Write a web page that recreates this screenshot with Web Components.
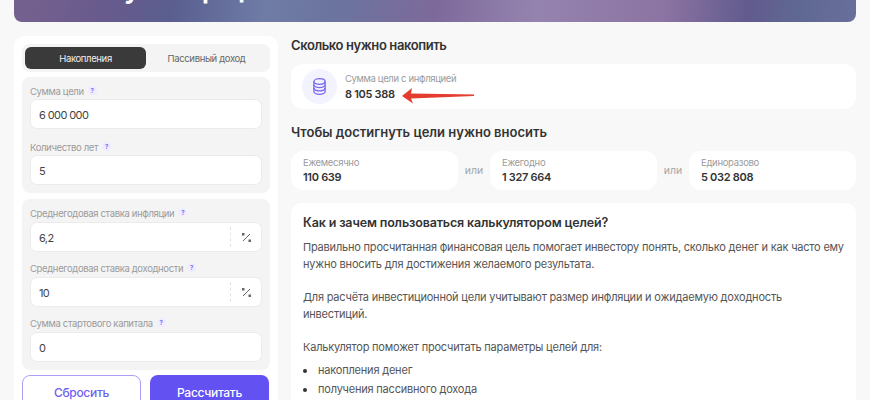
<!DOCTYPE html>
<html lang="ru">
<head>
<meta charset="utf-8">
<style>
  html, body { margin: 0; height: 400px; overflow: hidden; background: #f8f8f8; }
  body { font-family: Inter, "Noto Sans", sans-serif; color: #333; }
  .page { display: flex; flex-direction: column; padding: 0 14px; gap: 14px; }
  .main { display: grid; grid-template-columns: 264px 565px; column-gap: 13px; align-items: start; }
  .right { display: flex; flex-direction: column; }
  .sums { display: grid; grid-template-columns: 167px 32px 167px 32px 167px; align-items: center; }
  .or { font-size: 10.5px; color: #a5a5a5; text-align: center; }
</style>
</head>
<body>
<div class="page">
  <top-banner>Калькулятор целей</top-banner>
  <div class="main">
    <calc-form></calc-form>
    <div class="right">
      <section-title style="--ls:-.4px">Сколько нужно накопить</section-title>
      <goal-result label="Сумма цели с инфляцией" value="8 105 388"></goal-result>
      <section-title style="--top:14px">Чтобы достигнуть цели нужно вносить</section-title>
      <div class="sums">
        <sum-card label="Ежемесячно" value="110 639"></sum-card>
        <span class="or">или</span>
        <sum-card label="Ежегодно" value="1 327 664"></sum-card>
        <span class="or">или</span>
        <sum-card label="Единоразово" value="5 032 808"></sum-card>
      </div>
      <info-card></info-card>
    </div>
  </div>
</div>

<script>
class TopBanner extends HTMLElement {
  constructor() {
    super();
    this.attachShadow({ mode: 'open' });
    this.shadowRoot.innerHTML = `
    <style>
      :host { display: block; height: 22px; border-radius: 0 0 8px 8px; overflow: hidden;
        background: linear-gradient(97deg, #74608f 2%, #675a8c 11%, #5a5f90 19%, #6f7ca6 30%, #6b749f 38%, #7d6a9b 50%, #9583af 62%, #8c74a3 77%, #625b8e 87%, #5f6892 93%, #686f9b 100%); }
      h1 { margin: -30px 0 0 25px; font-size: 28px; line-height: 36px; font-weight: 600; color: #fff; white-space: nowrap; }
    </style>
    <h1><slot></slot></h1>`;
  }
}

class SectionTitle extends HTMLElement {
  constructor() {
    super();
    this.attachShadow({ mode: 'open' });
    this.shadowRoot.innerHTML = `
    <style>
      :host { display: block; margin-top: var(--top, 0); height: 28px; line-height: 18px;
        font-size: 13px; font-weight: 600; color: #333; letter-spacing: var(--ls, 0); }
    </style>
    <slot></slot>`;
  }
}

class GoalResult extends HTMLElement {
  constructor() {
    super();
    this.attachShadow({ mode: 'open' });
    this.shadowRoot.innerHTML = `
    <style>
      :host { display: flex; align-items: center; height: 45px; background: #fff; border-radius: 12px; padding-left: 11px; position: relative; }
      .ico { width: 35px; height: 35px; border-radius: 50%; background: #f3f2ff; display: flex; align-items: center; justify-content: center; margin-right: 8px; }
      .lbl { font-size: 9.5px; letter-spacing: -.35px; color: #9b9b9b; line-height: 13px; padding-top: 1px; }
      .val { font-size: 11px; font-weight: 600; letter-spacing: -.3px; color: #333; line-height: 16px; margin-top: 1px; }
      .arrow { position: absolute; left: 110px; top: 24px; }
    </style>
    <div class="ico">
      <svg width="13" height="17" viewBox="0 0 13 17" fill="none" stroke="#7668f0" stroke-width="1.3">
        <ellipse cx="6.500" cy="3.500" rx="5.600" ry="2.800"/>
        <path d="M.9 3.500v10c0 1.500 2.500 2.800 5.600 2.800s5.600-1.300 5.600-2.800v-10"/>
        <path d="M.9 6.800c0 1.500 2.500 2.800 5.600 2.800s5.600-1.300 5.600-2.800"/>
        <path d="M.9 10.100c0 1.500 2.500 2.800 5.600 2.800s5.600-1.300 5.600-2.800"/>
      </svg>
    </div>
    <div>
      <div class="lbl">${this.getAttribute('label')}</div>
      <div class="val">${this.getAttribute('value')}</div>
    </div>
    <svg class="arrow" width="74" height="16" viewBox="0 0 74 16">
      <path d="M1 8 L11 0 L10 5.500 L73 6.500 L73 8 L10 10.500 L12 15.500 Z" fill="#e43c2f"/>
    </svg>`;
  }
}

class SumCard extends HTMLElement {
  constructor() {
    super();
    this.attachShadow({ mode: 'open' });
    this.shadowRoot.innerHTML = `
    <style>
      :host { display: block; height: 39px; box-sizing: border-box; background: #fff; border-radius: 12px; padding: 6px 12px; }
      .lbl { font-size: 9.5px; letter-spacing: -.3px; color: #9b9b9b; line-height: 12px; }
      .val { font-size: 11px; font-weight: 600; letter-spacing: -.3px; color: #333; line-height: 16px; }
    </style>
    <div class="lbl">${this.getAttribute('label')}</div>
    <div class="val">${this.getAttribute('value')}</div>`;
  }
}

class FormField extends HTMLElement {
  constructor() {
    super();
    this.attachShadow({ mode: 'open' });
    const unit = this.hasAttribute('percent')
      ? `<span class="unit"><svg width="9" height="9" viewBox="0 0 9 9" fill="none" stroke="#666" stroke-width="1"><path d="M8 1 1 8"/><rect x="0.500" y="0.500" width="1.500" height="1.500" fill="#666"/><rect x="7" y="7" width="1.500" height="1.500" fill="#666"/></svg></span>`
      : '';
    this.shadowRoot.innerHTML = `
    <style>
      :host { display: block; }
      .lbl { display: flex; gap: 4px; height: 22px; box-sizing: border-box; padding-top: var(--label-top, 6px); align-items: center; font-size: 9.5px; letter-spacing: -.35px; color: #9b9b9b; }
      .q { font-size: 6px; font-weight: 700; letter-spacing: 0; color: #7d6ff5; width: 9px; height: 9px; line-height: 9px; text-align: center; border-radius: 50%; background: #efedff; margin-top: -3px; }
      .box { display: flex; align-items: center; height: 30px; box-sizing: border-box; background: #fff; border: 1px solid #ececec; border-radius: 7px; padding-left: 8px; font-size: 11px; letter-spacing: -.6px; color: #444; }
      .txt { flex: 1; padding-top: 1px; }
      .unit { width: 30px; height: 20px; border-left: 1px dashed #e2e2e2; display: flex; align-items: center; justify-content: center; }
    </style>
    <div class="lbl"><span>${this.getAttribute('label')}</span><span class="q">?</span></div>
    <div class="box"><span class="txt">${this.getAttribute('value')}</span>${unit}</div>`;
  }
}

class CalcForm extends HTMLElement {
  constructor() {
    super();
    this.attachShadow({ mode: 'open' });
    this.shadowRoot.innerHTML = `
    <style>
      :host { display: block; height: 380px; box-sizing: border-box; background: #fff; border-radius: 10px; padding: 8px; }
      .tabs { display: grid; grid-template-columns: 121px 1fr; height: 28px; box-sizing: border-box; padding: 3px; background: #f4f4f4; border-radius: 7px; font-size: 9.5px; letter-spacing: -.35px; margin-bottom: 5px; }
      .tabs span { display: flex; align-items: center; justify-content: center; color: #666; }
      .tabs .on { background: #3a3a3a; color: #eee; border-radius: 6px; }
      .group { --label-top: 7px; display: flex; flex-direction: column; gap: 4px; background: #f4f4f4; border-radius: 8px; padding: 0 8px 8px; margin-bottom: 6px; }
      .group.rates { --label-top: 5px; gap: 3px; padding-top: 1px; margin-bottom: 5px; }
      .btns { display: grid; grid-template-columns: 119px 119px; column-gap: 9px; }
      .btn { height: 34px; box-sizing: border-box; border-radius: 8px; display: flex; align-items: center; justify-content: center; font-size: 12px; font-weight: 500; letter-spacing: -.3px; }
      .reset { background: #fff; border: 1px solid #a99ff8; color: #7060f2; }
      .calc { background: #6351f2; color: #fff; }
    </style>
    <div class="tabs"><span class="on">Накопления</span><span>Пассивный доход</span></div>
    <div class="group">
      <form-field label="Сумма цели" value="6 000 000"></form-field>
      <form-field label="Количество лет" value="5"></form-field>
    </div>
    <div class="group rates">
      <form-field label="Среднегодовая ставка инфляции" value="6,2" percent></form-field>
      <form-field label="Среднегодовая ставка доходности" value="10" percent></form-field>
      <form-field label="Сумма стартового капитала" value="0"></form-field>
    </div>
    <div class="btns"><div class="btn reset">Сбросить</div><div class="btn calc">Рассчитать</div></div>`;
  }
}

class InfoCard extends HTMLElement {
  constructor() {
    super();
    this.attachShadow({ mode: 'open' });
    this.shadowRoot.innerHTML = `
    <style>
      :host { display: block; margin-top: 13px; height: 240px; box-sizing: border-box; background: #fff; border-radius: 10px; padding: 11px 12px; font-size: 11px; letter-spacing: -.2px; line-height: 16.700px; color: #555; }
      h3 { margin: 0 0 8px; font-size: 12.500px; letter-spacing: -.15px; line-height: 17px; font-weight: 600; color: #333; }
      p { margin: 0 0 16.700px; }
      ul { margin: -11px 0 0; padding: 0 0 0 15px; list-style: none; }
      li { margin-bottom: 2.300px; position: relative; }
      li::before { content: ""; position: absolute; left: -15px; top: 7px; width: 4px; height: 4px; border-radius: 50%; background: #333; }
    </style>
    <h3>Как и зачем пользоваться калькулятором целей?</h3>
    <p>Правильно просчитанная финансовая цель помогает инвестору понять, сколько денег и как часто ему нужно вносить для достижения желаемого результата.</p>
    <p>Для расчёта инвестиционной цели учитывают размер инфляции и ожидаемую доходность инвестиций.</p>
    <p>Калькулятор поможет просчитать параметры целей для:</p>
    <ul><li>накопления денег</li><li>получения пассивного дохода</li></ul>`;
  }
}

customElements.define('top-banner', TopBanner);
customElements.define('section-title', SectionTitle);
customElements.define('goal-result', GoalResult);
customElements.define('sum-card', SumCard);
customElements.define('form-field', FormField);
customElements.define('calc-form', CalcForm);
customElements.define('info-card', InfoCard);
</script>
</body>
</html>
